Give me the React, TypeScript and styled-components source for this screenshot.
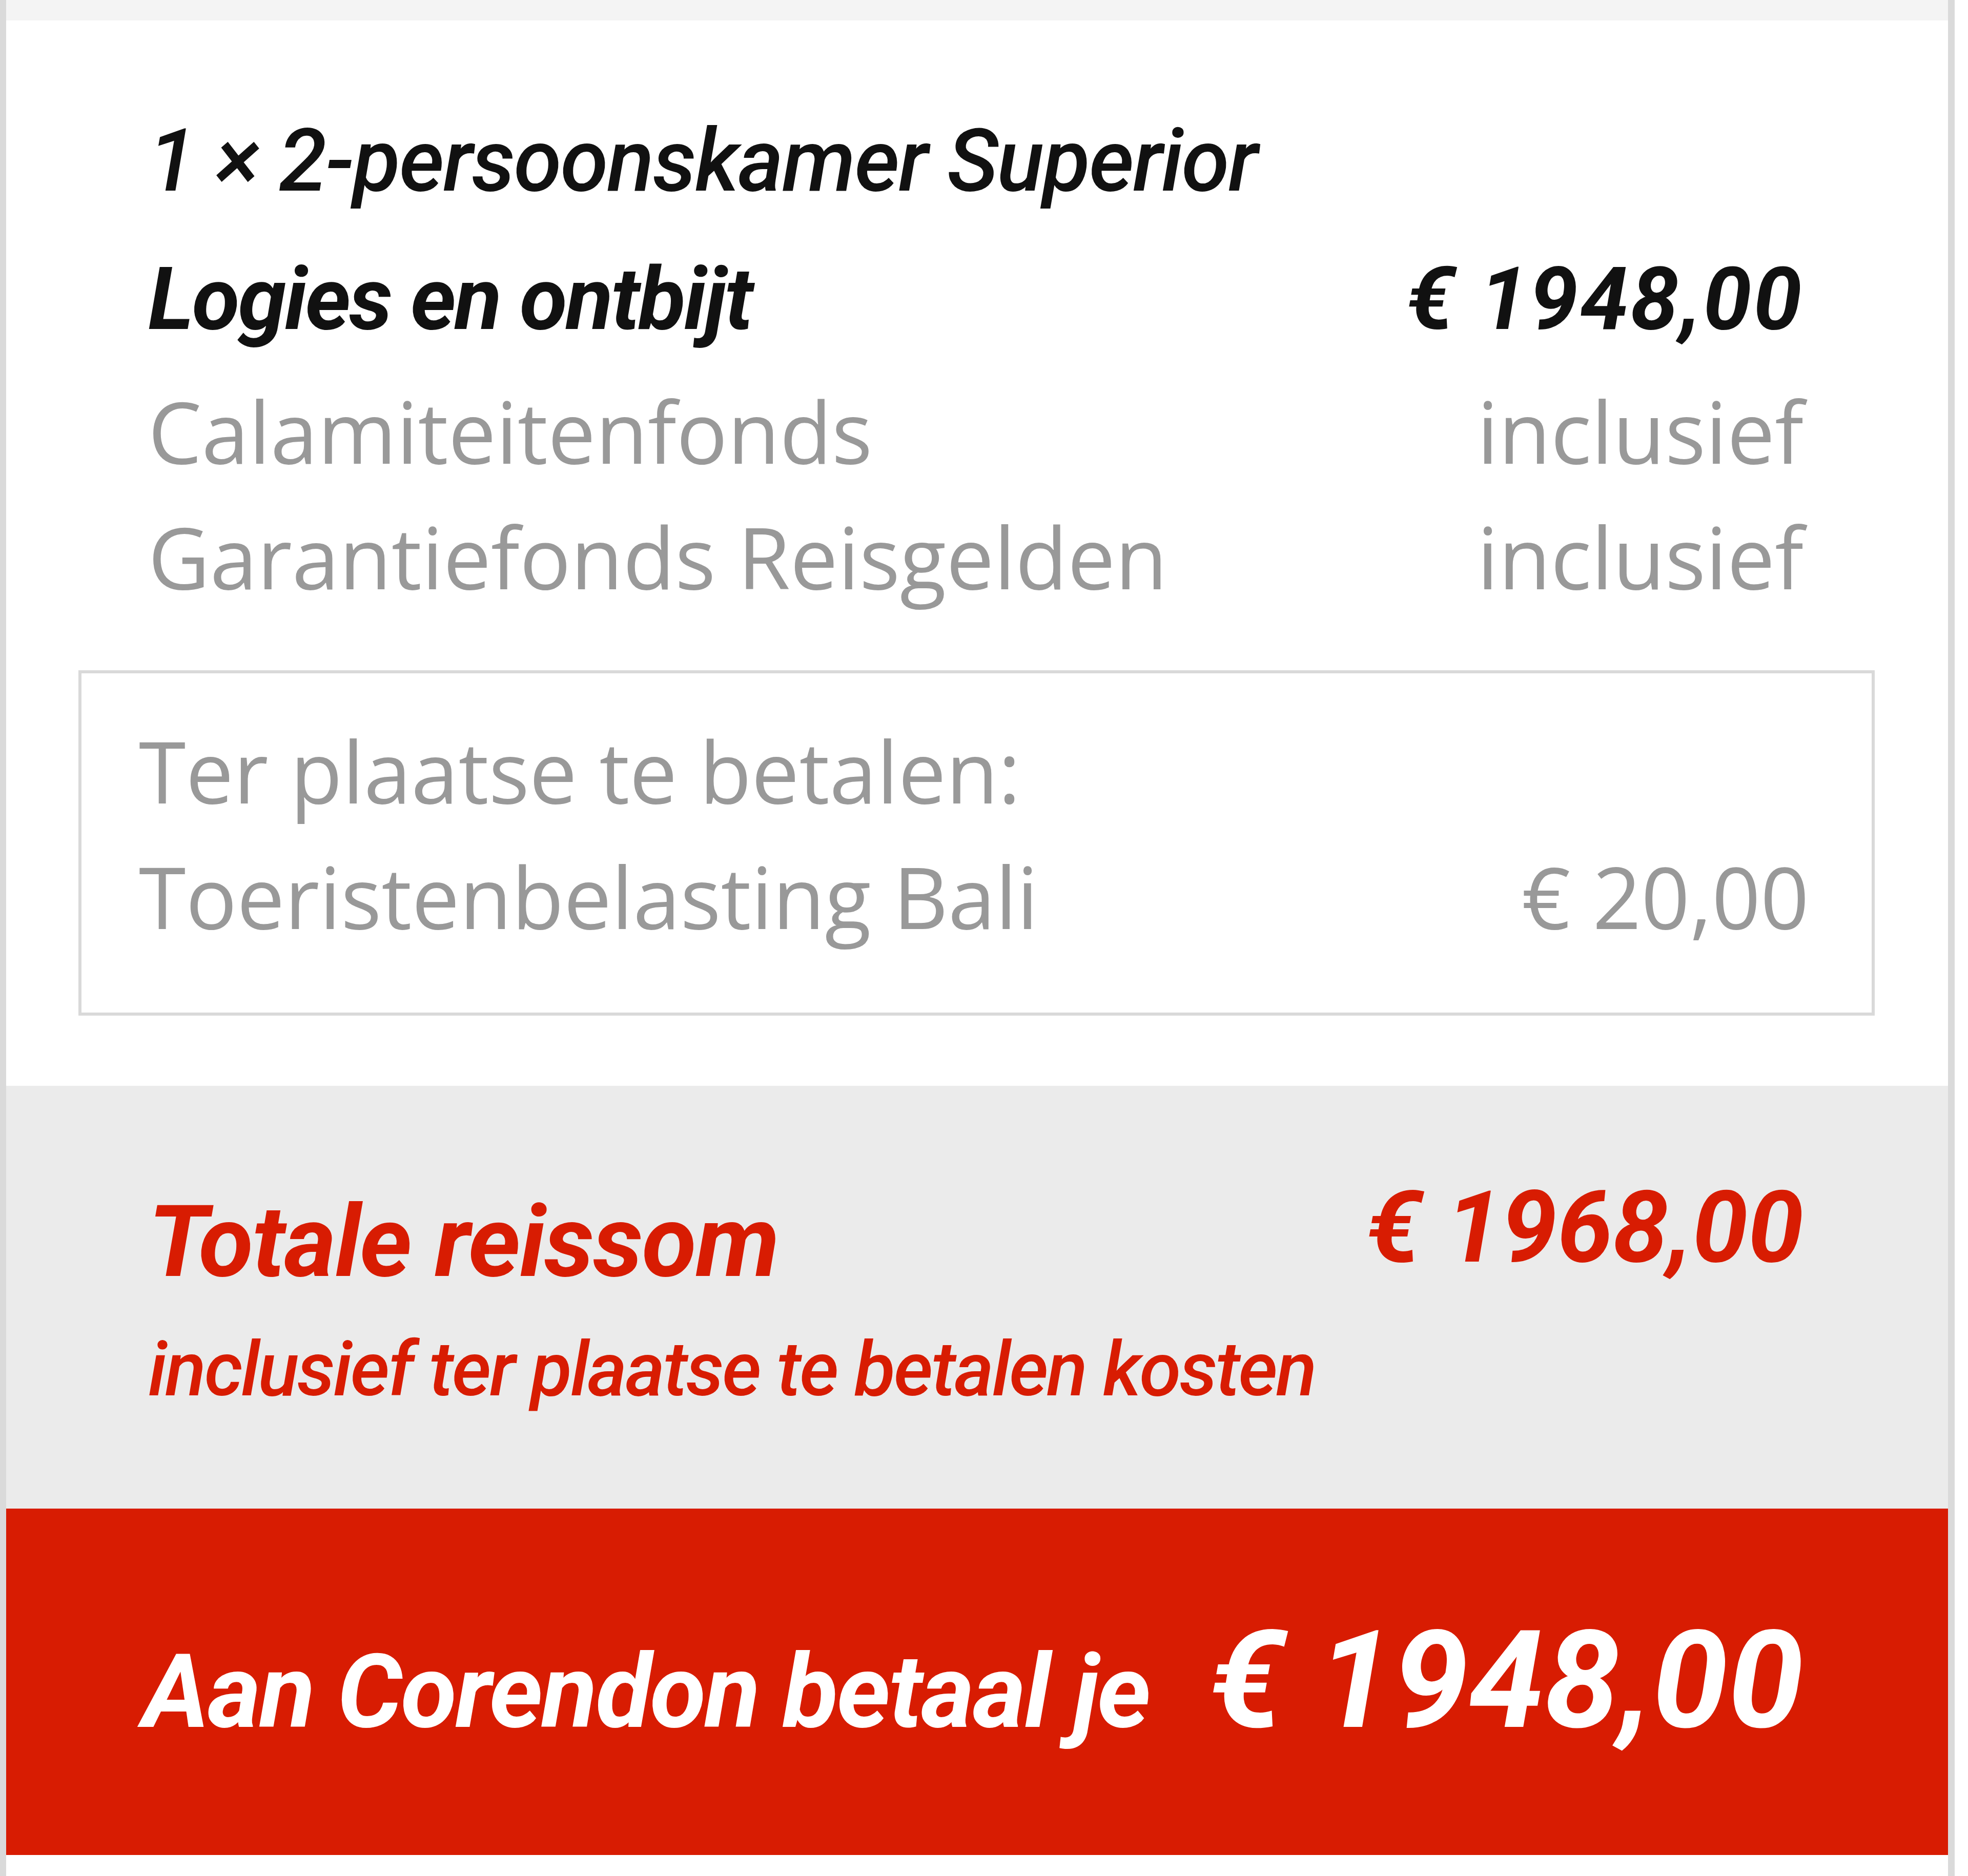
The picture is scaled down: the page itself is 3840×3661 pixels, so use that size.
import React from "react";
import styled, {createGlobalStyle} from "styled-components";

const RED = "#d81c02";

const GlobalStyle = createGlobalStyle`
  html, body {
    margin: 0;
    padding: 0;
    background: #ffffff;
  }

  body {
    font-family: "Open Sans", "Liberation Sans", sans-serif;
  }
`;

const Panel = styled.div`
  width: 3814px;
  min-height: 3661px;
  box-sizing: border-box;
  border-left: 12px solid #dadada;
  border-right: 13px solid #dadada;
  background: #ffffff;
  display: flex;
  flex-direction: column;
`;

const TopBand = styled.div`
  height: 40px;
  background: #f4f4f4;
`;

const Details = styled.div`
  padding: 139px 0 137px;
`;

const Lines = styled.div`
  padding: 0 282px 0 277px;
`;

type Tone = "title" | "strong" | "muted";

const toneStyles: Record<Tone, string> = {
    title: `
    font-family: Roboto, "Liberation Sans", sans-serif;
    font-weight: 500;
    font-style: italic;
    font-size: 170px;
    line-height: 270px;
    letter-spacing: -0.015em;
    color: #111111;
  `,
    strong: `
    font-family: Roboto, "Liberation Sans", sans-serif;
    font-weight: 700;
    font-style: italic;
    font-size: 170px;
    line-height: 270px;
    letter-spacing: -0.02em;
    color: #111111;
  `,
    muted: `
    font-family: "Open Sans", "Liberation Sans", sans-serif;
    font-weight: 400;
    font-style: normal;
    font-size: 166px;
    line-height: 245px;
    color: #999999;
  `,
};

const Line = styled.div<{$tone: Tone}>`
  display: flex;
  justify-content: space-between;
  align-items: baseline;
  white-space: nowrap;
  ${({$tone}) => toneStyles[$tone]}
`;

const Price = styled.span`
  letter-spacing: 0.02em;
`;

const PayOnSite = styled.div`
  margin: 99px 143px 0 141px;
  border: 6px solid #d9d9d9;
  padding: 68px 122px 104px 112px;
`;

const Summary = styled.div`
  background: #ebebeb;
  padding: 175px 282px 181px 277px;
  color: ${RED};
  font-family: Roboto, "Liberation Sans", sans-serif;
  font-style: italic;
`;

const TotalRow = styled.div`
  display: flex;
  justify-content: space-between;
  align-items: flex-start;
  white-space: nowrap;
`;

const TotalLabel = styled.span`
  font-weight: 700;
  font-size: 195px;
  line-height: 260px;
  letter-spacing: -0.01em;
`;

const TotalAmount = styled.span`
  font-weight: 700;
  font-size: 195px;
  line-height: 204px;
`;

const TotalNote = styled.div`
  margin-top: 29px;
  font-weight: 500;
  font-size: 148px;
  line-height: 180px;
  letter-spacing: -0.023em;
  white-space: nowrap;
`;

const PayBar = styled.div`
  height: 676px;
  box-sizing: border-box;
  padding: 203px 282px 0 266px;
  background: ${RED};
  color: #ffffff;
  display: flex;
  justify-content: space-between;
  align-items: baseline;
  font-family: Roboto, "Liberation Sans", sans-serif;
  font-style: italic;
  font-weight: 700;
  white-space: nowrap;
`;

const PayLabel = styled.span`
  font-size: 200px;
  line-height: 1;
  letter-spacing: -0.015em;
`;

const PayAmount = styled.span`
  font-size: 265px;
  line-height: 265px;
`;

export default function App() {
    return (
        <>
            <GlobalStyle />
            <Panel>
                <TopBand />
                <Details>
                    <Lines>
                        <Line $tone="title">
                            <span>1 × 2-persoonskamer Superior</span>
                        </Line>
                        <Line $tone="strong">
                            <span>Logies en ontbijt</span>
                            <Price>€ 1948,00</Price>
                        </Line>
                        <Line $tone="muted">
                            <span>Calamiteitenfonds</span>
                            <span>inclusief</span>
                        </Line>
                        <Line $tone="muted">
                            <span>Garantiefonds Reisgelden</span>
                            <span>inclusief</span>
                        </Line>
                    </Lines>
                    <PayOnSite>
                        <Line $tone="muted">
                            <span>Ter plaatse te betalen:</span>
                        </Line>
                        <Line $tone="muted">
                            <span>Toeristenbelasting Bali</span>
                            <span>€ 20,00</span>
                        </Line>
                    </PayOnSite>
                </Details>
                <Summary>
                    <TotalRow>
                        <TotalLabel>Totale reissom</TotalLabel>
                        <TotalAmount>€ 1968,00</TotalAmount>
                    </TotalRow>
                    <TotalNote>inclusief ter plaatse te betalen kosten</TotalNote>
                </Summary>
                <PayBar>
                    <PayLabel>Aan Corendon betaal je</PayLabel>
                    <PayAmount>€ 1948,00</PayAmount>
                </PayBar>
            </Panel>
        </>
    );
}
